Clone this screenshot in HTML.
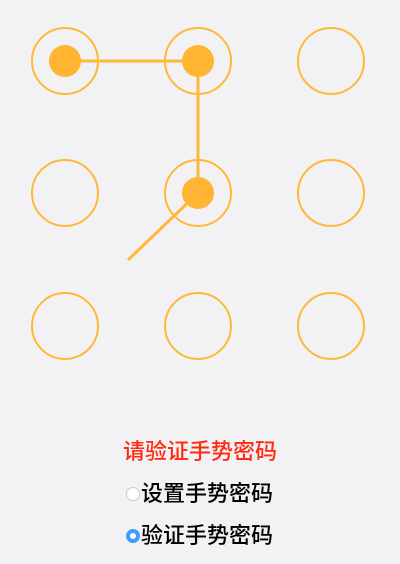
<!DOCTYPE html>
<html><head><meta charset="utf-8"><style>
html,body{margin:0;padding:0;background:#f2f2f4;width:400px;height:564px;overflow:hidden;font-family:"Liberation Sans","Noto Sans CJK SC",sans-serif;}
svg{position:absolute;left:0;top:0}
.t{position:absolute;left:0;width:400px;text-align:center;font-size:22px;line-height:22px;white-space:nowrap;font-weight:500}
.r{position:absolute;font-size:22px;line-height:22px;color:#000;white-space:nowrap;font-weight:500}
.rb{display:inline-block;width:14px;height:14px;border-radius:50%;box-sizing:border-box;vertical-align:middle;position:relative;top:-1px;margin-right:1px}
</style></head><body>
<svg width="400" height="420">
<g fill="none" stroke="#ffb838" stroke-width="2">
<circle cx="65" cy="61" r="33"/><circle cx="198" cy="61" r="33"/><circle cx="331" cy="61" r="33"/>
<circle cx="65" cy="193" r="33"/><circle cx="198" cy="193" r="33"/><circle cx="331" cy="193" r="33"/>
<circle cx="65" cy="326" r="33"/><circle cx="198" cy="326" r="33"/><circle cx="331" cy="326" r="33"/>
</g>
<polyline points="65,61 198,61 198,193 128,260" fill="none" stroke="#ffb838" stroke-width="3"/>
<g fill="#ffb531"><circle cx="65" cy="61" r="16"/><circle cx="198" cy="61" r="16"/><circle cx="198" cy="193" r="16"/></g>
</svg>
<div class="t" style="top:441px;color:#ff2a10">请验证手势密码</div>
<div class="r" style="left:126px;top:483px"><span class="rb" style="border:1px solid #ccc;background:#fff"></span>设置手势密码</div>
<div class="r" style="left:126px;top:525px"><span class="rb" style="border:4px solid #3c9ef8;background:#fff"></span>验证手势密码</div>
</body></html>
